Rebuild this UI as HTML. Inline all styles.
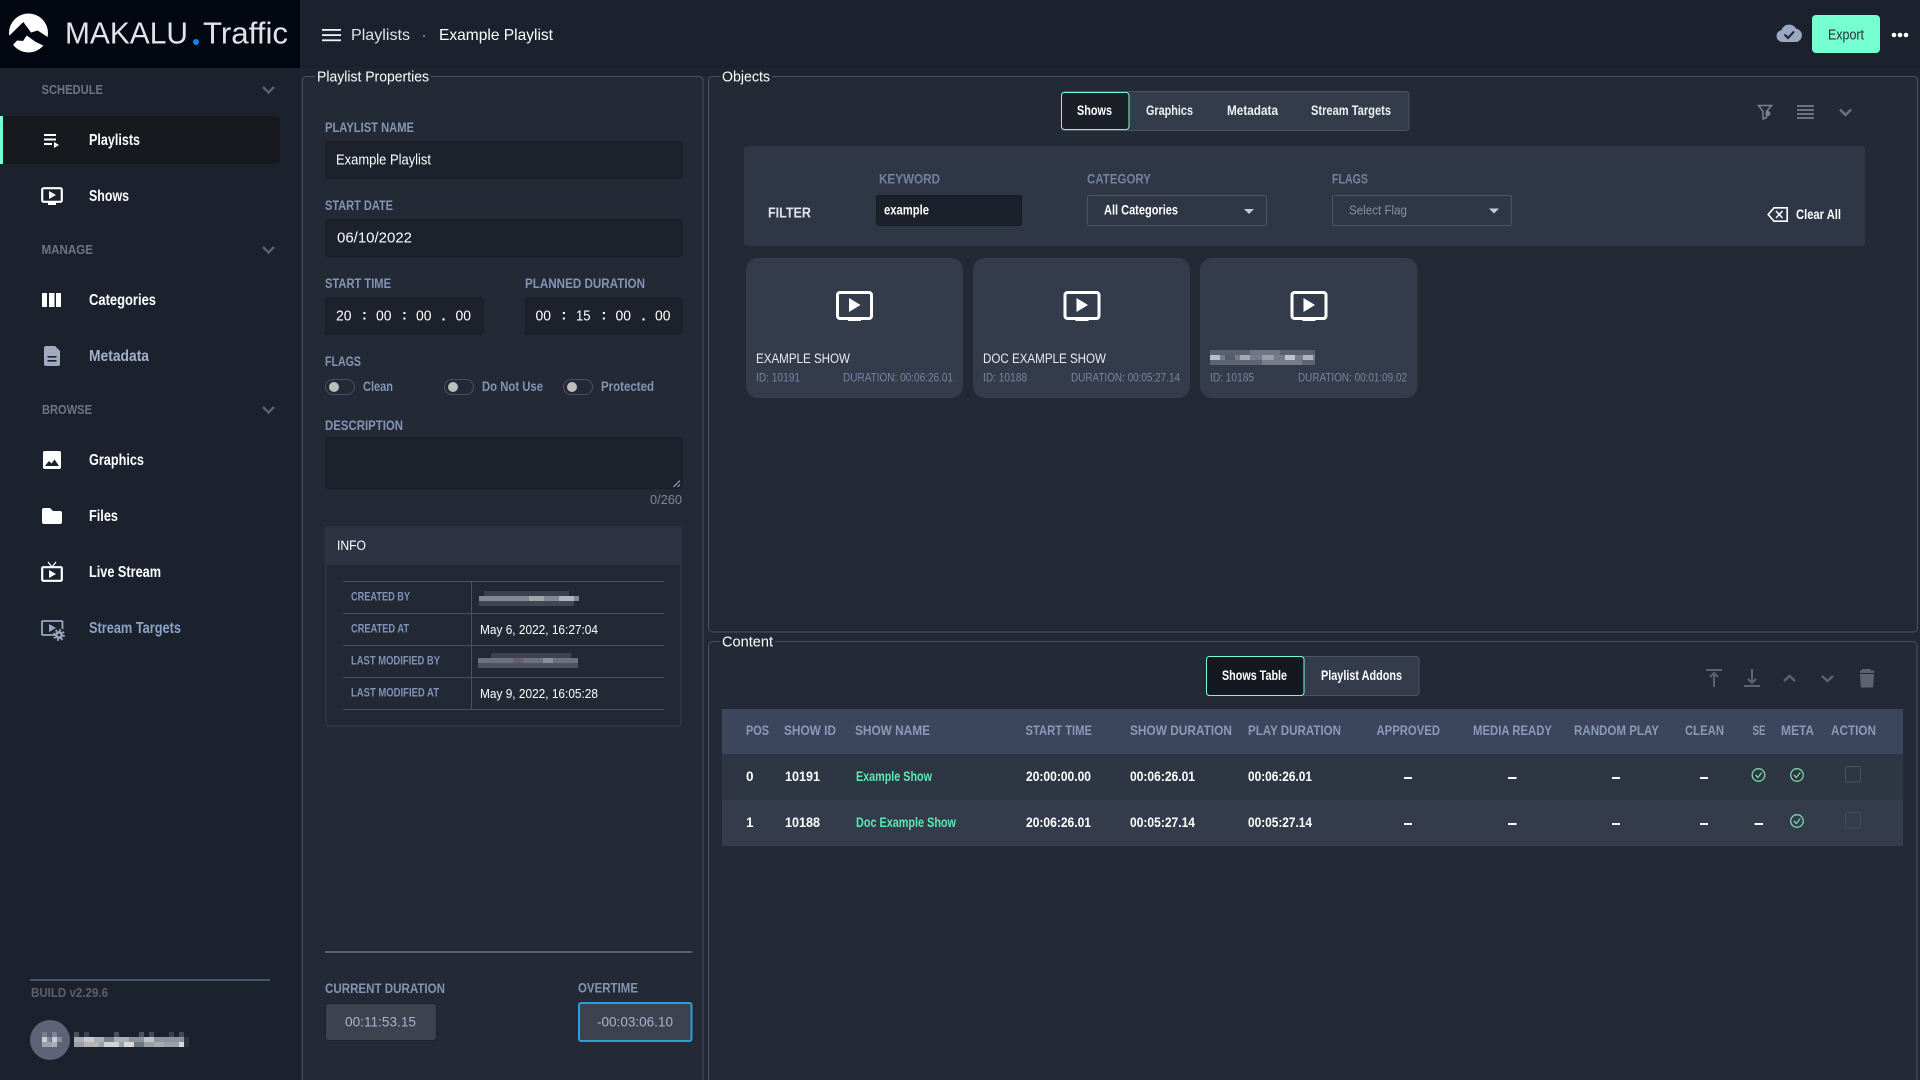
<!DOCTYPE html>
<html lang="en"><head><meta charset="utf-8"><title>Playlists - MAKALU.Traffic</title>
<style>
html,body{margin:0;padding:0;background:#232934;width:1920px;height:1080px;overflow:hidden}
svg{display:block;font-family:"Liberation Sans",sans-serif}
text{white-space:pre;transform:translateY(-.3px)}
.b{font-weight:700}
.lab{font-weight:700;font-size:13.5px;fill:#8494b5}
.sec{font-weight:700;font-size:13px;fill:#6f7480}
.nav{font-weight:700;font-size:15.5px;fill:#fff}
.val{font-size:14.5px;fill:#fff}
.tl{font-weight:700;font-size:11.5px;fill:#7f93b8}
.tv{font-size:13px;fill:#fff}
.th{font-weight:700;font-size:13.5px;fill:#8a9ab8}
.td{font-weight:700;font-size:13.5px;fill:#fff}
.ln{font-weight:700;font-size:13.5px;fill:#5ce9b5}
.tab{font-weight:700;font-size:14px;fill:#eef0f4}
.meta{font-size:12px;fill:#7685a4}
.ct{font-size:13.5px;fill:#e8ebf0}
.leg{font-size:15px;fill:#fff}
.ti{font-size:14.5px;fill:#fff}
</style></head><body>
<svg width="1920" height="1080" viewBox="0 0 1920 1080" xmlns="http://www.w3.org/2000/svg">
<!-- base -->
<rect width="1920" height="1080" fill="#232934"/>
<rect x="300" y="0" width="1620" height="68" fill="#1c222d"/>
<rect x="300" y="68" width="1620" height="8" fill="#1f2530"/>
<rect x="0" y="0" width="300" height="1080" fill="#1c222d"/>
<rect x="0" y="0" width="300" height="68" fill="#030711"/>

<!-- logo -->
<circle cx="28.5" cy="33" r="19.5" fill="#fff"/>
<path d="M8 37L23.3 22 31 32.500 37.700 30.500 49 38V42L43 45.500 35 41.500 26.700 35.500 23 41 17 40.500 13 45 8 43Z" fill="#030711"/>
<text x="65" y="44" font-size="30.5" fill="#e2e3e6" textLength="123" lengthAdjust="spacingAndGlyphs">MAKALU</text>
<rect x="193" y="39" width="6" height="6" rx="3" fill="#0a84ff"/>
<text x="203" y="44" font-size="30.5" fill="#e2e3e6" textLength="85" lengthAdjust="spacingAndGlyphs">Traffic</text>

<!-- sidebar -->
<text class="sec" x="41.5" y="94.5" textLength="61.5" lengthAdjust="spacingAndGlyphs">SCHEDULE</text>
<path d="M263 87l5.5 5.5L274 87" fill="none" stroke="#5c616d" stroke-width="2.4"/>
<path d="M0 116H276a4 4 0 0 1 4 4V160a4 4 0 0 1-4 4H0Z" fill="#17191f"/>
<rect x="0" y="116" width="3" height="48" fill="#75ffd0"/>
<g fill="#fff"><rect x="44" y="134" width="12" height="2"/><rect x="44" y="138.5" width="12" height="2"/><rect x="44" y="143" width="8" height="2"/><path d="M54 142l5 3-5 3z"/></g>
<text class="nav" x="89" y="145.5" textLength="51" lengthAdjust="spacingAndGlyphs">Playlists</text>

<rect x="42.2" y="188.2" width="19.6" height="13.6" rx="1.5" fill="none" stroke="#fff" stroke-width="2.2"/><rect x="48" y="202" width="8" height="3" fill="#fff"/><path d="M49 191l7 4-7 4z" fill="#fff"/>
<text class="nav" x="89" y="201.5" textLength="40" lengthAdjust="spacingAndGlyphs">Shows</text>

<text class="sec" x="41.5" y="254.5" textLength="51.5" lengthAdjust="spacingAndGlyphs">MANAGE</text>
<path d="M263 247l5.5 5.5L274 247" fill="none" stroke="#5c616d" stroke-width="2.4"/>
<g fill="#fff"><rect x="42" y="293" width="5" height="14"/><rect x="49" y="293" width="5.5" height="14"/><rect x="56" y="293" width="5" height="14"/></g>
<text class="nav" x="89" y="305.5" textLength="67" lengthAdjust="spacingAndGlyphs">Categories</text>

<path d="M46 346h9l5 5v13a2 2 0 0 1-2 2H46a2 2 0 0 1-2-2V348a2 2 0 0 1 2-2Z" fill="#a0aac0"/><rect x="47.5" y="356" width="9" height="1.6" fill="#1c222d"/><rect x="47.5" y="360" width="9" height="1.6" fill="#1c222d"/>
<text class="nav" x="89" y="361.5" textLength="60" lengthAdjust="spacingAndGlyphs" style="fill:#a3b0cc">Metadata</text>

<text class="sec" x="42" y="414.5" textLength="50" lengthAdjust="spacingAndGlyphs">BROWSE</text>
<path d="M263 407l5.5 5.5L274 407" fill="none" stroke="#5c616d" stroke-width="2.4"/>
<rect x="43" y="451" width="18" height="18" rx="2" fill="#fff"/><path d="M45 466l4-5 2.5 2.5 3-4 4.5 6.5z" fill="#1c222d"/>
<text class="nav" x="89" y="465.5" textLength="55" lengthAdjust="spacingAndGlyphs">Graphics</text>

<path d="M42 510a2 2 0 0 1 2-2h6l3 3h7a2 2 0 0 1 2 2v9a2 2 0 0 1-2 2H44a2 2 0 0 1-2-2Z" fill="#fff"/>
<text class="nav" x="89" y="521.5" textLength="29" lengthAdjust="spacingAndGlyphs">Files</text>

<rect x="42.2" y="567.2" width="19.6" height="13.6" rx="1" fill="none" stroke="#fff" stroke-width="2.2"/><path d="M48 562l4 5 4-5" fill="none" stroke="#fff" stroke-width="1.2"/><path d="M49 570l7 4-7 4z" fill="#fff"/>
<text class="nav" x="89" y="577.5" textLength="72" lengthAdjust="spacingAndGlyphs">Live Stream</text>

<path d="M55 635H43a1 1 0 0 1-1-1V622a1 1 0 0 1 1-1H61.500a1 1 0 0 1 1 1v7" fill="none" stroke="#9ca8c0" stroke-width="1.800"/><path d="M49 624l7 4-7 4z" fill="#9ca8c0"/>
<circle cx="59" cy="635" r="4" fill="#9ca8c0"/><circle cx="59" cy="635" r="5" fill="none" stroke="#9ca8c0" stroke-width="1.800" stroke-dasharray="2 1.930"/><circle cx="59" cy="635" r="1.400" fill="#1c222d"/>
<text class="nav" x="89" y="633.500" textLength="92" lengthAdjust="spacingAndGlyphs" style="fill:#8ba3c9">Stream Targets</text>

<rect x="30" y="979" width="240" height="2" fill="#465470"/>
<text class="sec" x="31" y="997.500" textLength="77" lengthAdjust="spacingAndGlyphs" style="fill:#5b606c">BUILD v2.29.6</text>
<circle cx="50" cy="1040" r="20" fill="#5e6377"/>
<g fill="#c9ced6"><rect x="42" y="1032" width="5" height="5" opacity=".25"/><rect x="52" y="1032" width="5" height="5" opacity=".3"/><rect x="42" y="1037" width="5" height="5"/><rect x="47" y="1037" width="4" height="5" opacity=".35"/><rect x="52" y="1037" width="5" height="5"/><rect x="57" y="1037" width="5" height="5" opacity=".4"/><rect x="42" y="1042" width="5" height="5" opacity=".6"/><rect x="47" y="1042" width="5" height="5" opacity=".6"/><rect x="52" y="1042" width="5" height="5" opacity=".7"/></g>
<g>
<rect x="74" y="1032" width="5" height="5" fill="#4a4f59"/><rect x="84" y="1032" width="5" height="5" fill="#3e4450"/><rect x="114" y="1032" width="5" height="5" fill="#4a4f59"/><rect x="139" y="1032" width="5" height="5" fill="#4c525e"/><rect x="149" y="1032" width="5" height="5" fill="#454b57"/><rect x="169" y="1032" width="5" height="5" fill="#3a404c"/><rect x="179" y="1032" width="5" height="5" fill="#454a54"/>
<rect x="74" y="1037" width="55" height="5" fill="#aab0b8"/><rect x="129" y="1037" width="55" height="5" fill="#8c939e"/><rect x="84" y="1037" width="10" height="5" fill="#c8ccd2"/><rect x="104" y="1037" width="10" height="5" fill="#7a808c"/><rect x="144" y="1037" width="10" height="5" fill="#c0c4c8"/><rect x="184" y="1037" width="5" height="5" fill="#2e333d"/>
<rect x="74" y="1042" width="110" height="5" fill="#9aa0aa"/><rect x="84" y="1042" width="15" height="5" fill="#b8b4b0"/><rect x="104" y="1042" width="15" height="5" fill="#d0d4d8"/><rect x="124" y="1042" width="10" height="5" fill="#e0d8d0"/><rect x="134" y="1042" width="10" height="5" fill="#707680"/><rect x="154" y="1042" width="10" height="5" fill="#a8acb0"/><rect x="179" y="1042" width="5" height="5" fill="#d8d8d8"/><rect x="184" y="1042" width="5" height="5" fill="#2e333d"/>
</g>

<!-- topbar -->
<g fill="#f2f3f5"><rect x="322" y="29" width="19" height="1.800"/><rect x="322" y="34.200" width="19" height="1.800"/><rect x="322" y="39.400" width="19" height="1.800"/></g>
<text x="351" y="40.500" font-size="16" fill="#e0e3e8" textLength="59" lengthAdjust="spacingAndGlyphs">Playlists</text>
<circle cx="424" cy="36" r="1.200" fill="#6d7483"/>
<text x="439" y="40.500" font-size="16" fill="#fff" textLength="114" lengthAdjust="spacingAndGlyphs">Example Playlist</text>
<path d="M1782 42a6 6 0 0 1-.5-11.900 8 8 0 0 1 14.500-1.500 6.800 6.800 0 0 1 .5 13.400Z" fill="#9ba8c4"/><path d="M1784.500 34.500l3.500 3.500 6-6.500" fill="none" stroke="#1c222d" stroke-width="2"/>
<rect x="1812" y="15" width="68" height="38" rx="4" fill="#75ffd0"/>
<text x="1828" y="40" font-size="14.500" fill="#2a3038" textLength="36" lengthAdjust="spacingAndGlyphs">Export</text>
<g fill="#fff"><circle cx="1894" cy="35" r="2.300"/><circle cx="1900" cy="35" r="2.300"/><circle cx="1906" cy="35" r="2.300"/></g>

<!-- left panel -->
<rect x="302.500" y="76.500" width="400.500" height="1010" rx="4" fill="#242a35" stroke="#4a5064"/>
<rect x="315" y="74" width="116" height="5" fill="#242a35"/>
<text class="leg" x="317" y="82" textLength="112" lengthAdjust="spacingAndGlyphs">Playlist Properties</text>

<text class="lab" x="325" y="132.500" textLength="89" lengthAdjust="spacingAndGlyphs">PLAYLIST NAME</text>
<rect x="325.500" y="141.500" width="356.500" height="37" rx="3" fill="#1c212c" stroke="#191d26"/>
<text class="val" x="336" y="165" textLength="95" lengthAdjust="spacingAndGlyphs">Example Playlist</text>

<text class="lab" x="325" y="210.500" textLength="68" lengthAdjust="spacingAndGlyphs">START DATE</text>
<rect x="325.500" y="219.500" width="356.500" height="37" rx="3" fill="#1c212c" stroke="#191d26"/>
<text class="val" x="337" y="243" textLength="75" lengthAdjust="spacingAndGlyphs">06/10/2022</text>

<text class="lab" x="325" y="288.500" textLength="66" lengthAdjust="spacingAndGlyphs">START TIME</text>
<text class="lab" x="525" y="288.500" textLength="120" lengthAdjust="spacingAndGlyphs">PLANNED DURATION</text>
<rect x="325.500" y="297.500" width="157.500" height="37" rx="3" fill="#1c212c" stroke="#191d26"/>
<rect x="525.500" y="297.500" width="156.500" height="37" rx="3" fill="#1c212c" stroke="#191d26"/>
<text class="ti" x="336" y="321" textLength="15.500" lengthAdjust="spacingAndGlyphs">20</text><text class="ti b" x="362" y="320">:</text>
<text class="ti" x="376" y="321" textLength="15.500" lengthAdjust="spacingAndGlyphs">00</text><text class="ti b" x="402" y="320">:</text>
<text class="ti" x="416" y="321" textLength="15.500" lengthAdjust="spacingAndGlyphs">00</text><text class="ti b" x="441.500" y="321">.</text>
<text class="ti" x="455.500" y="321" textLength="15.500" lengthAdjust="spacingAndGlyphs">00</text>
<text class="ti" x="535.500" y="321" textLength="15.500" lengthAdjust="spacingAndGlyphs">00</text><text class="ti b" x="561.500" y="320">:</text>
<text class="ti" x="576" y="321" textLength="14.500" lengthAdjust="spacingAndGlyphs">15</text><text class="ti b" x="601.500" y="320">:</text>
<text class="ti" x="615.500" y="321" textLength="15.500" lengthAdjust="spacingAndGlyphs">00</text><text class="ti b" x="641.500" y="321">.</text>
<text class="ti" x="655" y="321" textLength="15.500" lengthAdjust="spacingAndGlyphs">00</text>

<text class="lab" x="325" y="366.500" textLength="36" lengthAdjust="spacingAndGlyphs">FLAGS</text>
<g fill="none" stroke="#4a5064"><rect x="325.500" y="379.500" width="29" height="15" rx="7.500"/><rect x="444.500" y="379.500" width="29" height="15" rx="7.500"/><rect x="563.500" y="379.500" width="29" height="15" rx="7.500"/></g>
<g fill="#bdbdbd"><circle cx="334" cy="387" r="5"/><circle cx="453" cy="387" r="5"/><circle cx="572" cy="387" r="5"/></g>
<text class="lab" x="363" y="391.500" textLength="30" lengthAdjust="spacingAndGlyphs">Clean</text>
<text class="lab" x="482" y="391.500" textLength="61" lengthAdjust="spacingAndGlyphs">Do Not Use</text>
<text class="lab" x="601" y="391.500" textLength="53" lengthAdjust="spacingAndGlyphs">Protected</text>

<text class="lab" x="325" y="430.500" textLength="78" lengthAdjust="spacingAndGlyphs">DESCRIPTION</text>
<rect x="325.500" y="437.500" width="356.500" height="51" rx="3" fill="#1c212c" stroke="#191d26"/>
<path d="M673.500 487l6.500-6.500M677.500 487l2.500-2.500" stroke="#aab0bc" stroke-width="1"/>
<text x="650" y="504.500" font-size="12.500" fill="#7e8699" textLength="32" lengthAdjust="spacingAndGlyphs">0/260</text>

<rect x="325" y="526" width="357" height="201" rx="3" fill="#2d3342"/>
<rect x="327" y="565" width="353" height="160" fill="#232934"/>
<text x="337" y="550.500" font-size="13.500" fill="#fff" textLength="29" lengthAdjust="spacingAndGlyphs">INFO</text>
<g fill="#4a5163"><rect x="343" y="581" width="321" height="1"/><rect x="343" y="613" width="321" height="1"/><rect x="343" y="645" width="321" height="1"/><rect x="343" y="677" width="321" height="1"/><rect x="343" y="709" width="321" height="1"/><rect x="471" y="581" width="1" height="129"/></g>
<text class="tl" x="351" y="601" textLength="59" lengthAdjust="spacingAndGlyphs">CREATED BY</text>
<text class="tl" x="351" y="633" textLength="58" lengthAdjust="spacingAndGlyphs">CREATED AT</text>
<text class="tl" x="351" y="665" textLength="89" lengthAdjust="spacingAndGlyphs">LAST MODIFIED BY</text>
<text class="tl" x="351" y="697" textLength="88" lengthAdjust="spacingAndGlyphs">LAST MODIFIED AT</text>
<text class="tv" x="480" y="634.500" textLength="118" lengthAdjust="spacingAndGlyphs">May 6, 2022, 16:27:04</text>
<text class="tv" x="480" y="698.500" textLength="118" lengthAdjust="spacingAndGlyphs">May 9, 2022, 16:05:28</text>
<rect x="479" y="596" width="100" height="5" fill="#838896"/><rect x="484" y="591" width="85" height="5" fill="#3a404c"/><rect x="479" y="601" width="95" height="5" fill="#414753"/>
<rect x="529" y="596" width="15" height="5" fill="#a0a8aa"/><rect x="559" y="596" width="15" height="5" fill="#b0b4c0"/>
<rect x="478" y="658" width="100" height="5" fill="#6d727e"/><rect x="491" y="653" width="80" height="5" fill="#3d434f"/><rect x="478" y="663" width="100" height="5" fill="#4e535f"/>
<rect x="513" y="658" width="10" height="5" fill="#6e5c6e"/><rect x="543" y="658" width="10" height="5" fill="#8a8e98"/>

<rect x="325" y="951" width="367" height="2" fill="#53607a"/>
<text class="lab" x="325" y="993.500" textLength="120" lengthAdjust="spacingAndGlyphs">CURRENT DURATION</text>
<rect x="325.500" y="1003.500" width="111" height="37" rx="3" fill="#3d424e" stroke="#1e222b"/>
<text x="345" y="1027" font-size="14" fill="#a6b4cf" textLength="71" lengthAdjust="spacingAndGlyphs">00:11:53.15</text>
<text class="lab" x="578" y="993" textLength="60" lengthAdjust="spacingAndGlyphs">OVERTIME</text>
<rect x="579" y="1003" width="112.500" height="38" rx="2" fill="#3d424e" stroke="#2aa0d8" stroke-width="2"/>
<text x="597" y="1027" font-size="14" fill="#a6b4cf" textLength="76" lengthAdjust="spacingAndGlyphs">-00:03:06.10</text>

<!-- objects panel -->
<rect x="708.500" y="76.500" width="1209" height="555.500" rx="4" fill="#242a35" stroke="#4a5064"/>
<rect x="720" y="74" width="52" height="5" fill="#242a35"/>
<text class="leg" x="722" y="82" textLength="48" lengthAdjust="spacingAndGlyphs">Objects</text>

<rect x="1061.500" y="91.500" width="347.500" height="39" rx="3" fill="#343c4b" stroke="#4a5263"/>
<rect x="1061.500" y="92.500" width="67.500" height="37" rx="3" fill="#1b1f28" stroke="#75ffd0"/>
<text class="tab" x="1077" y="115.500" textLength="35" lengthAdjust="spacingAndGlyphs" style="fill:#fff">Shows</text>
<text class="tab" x="1146" y="115.500" textLength="47" lengthAdjust="spacingAndGlyphs">Graphics</text>
<text class="tab" x="1227" y="115.500" textLength="51" lengthAdjust="spacingAndGlyphs">Metadata</text>
<text class="tab" x="1311" y="115.500" textLength="80" lengthAdjust="spacingAndGlyphs">Stream Targets</text>

<path d="M1758.500 105.500h13l-5 6 -0 6 -3.500 1.500v-7.500z" fill="none" stroke="#7a8090" stroke-width="1.500"/><circle cx="1768" cy="113.500" r="2.500" fill="#7a8090"/>
<g fill="#6c7280"><rect x="1797" y="105" width="17" height="2"/><rect x="1797" y="109" width="17" height="2"/><rect x="1797" y="113" width="17" height="2"/><rect x="1797" y="117" width="17" height="2"/></g>
<path d="M1840 109.500l5.500 5.500 5.500-5.500" fill="none" stroke="#6c7280" stroke-width="2.400"/>

<rect x="744" y="146" width="1121" height="100" rx="3" fill="#2f3746"/>
<text x="768" y="218" font-size="14.500" class="b" fill="#dfe4ea" textLength="43" lengthAdjust="spacingAndGlyphs">FILTER</text>
<text class="lab" x="879" y="184" textLength="61" lengthAdjust="spacingAndGlyphs" style="fill:#73829f">KEYWORD</text>
<rect x="876.500" y="195.500" width="145" height="30" rx="2" fill="#1b202a" stroke="#171b23"/>
<text class="td" x="884" y="215" textLength="45" lengthAdjust="spacingAndGlyphs">example</text>
<text class="lab" x="1087" y="184" textLength="64" lengthAdjust="spacingAndGlyphs" style="fill:#73829f">CATEGORY</text>
<rect x="1087.500" y="195.500" width="179" height="30" rx="2" fill="#2f3746" stroke="#4d5567"/>
<text class="td" x="1104" y="215" textLength="74" lengthAdjust="spacingAndGlyphs">All Categories</text>
<path d="M1244 209h10l-5 5z" fill="#c8ccd4"/>
<text class="lab" x="1332" y="184" textLength="36" lengthAdjust="spacingAndGlyphs" style="fill:#73829f">FLAGS</text>
<rect x="1332.500" y="195.500" width="179" height="30" rx="2" fill="#2f3746" stroke="#4d5567"/>
<text x="1349" y="215" font-size="12.500" fill="#8790a0" textLength="58" lengthAdjust="spacingAndGlyphs">Select Flag</text>
<path d="M1489 208.500h10l-5 5z" fill="#c8ccd4"/>
<path d="M1774 207.800h13.200v13.400h-13.200l-5.800-6.700z" fill="none" stroke="#fff" stroke-width="1.600"/><path d="M1776 211l6.500 7M1782.500 211l-6.500 7" stroke="#fff" stroke-width="1.500"/>
<text class="tab" x="1796" y="219.500" textLength="45" lengthAdjust="spacingAndGlyphs" style="fill:#fff">Clear All</text>

<!-- cards -->
<g fill="#343c4b"><rect x="746" y="258" width="217" height="140" rx="12"/><rect x="973" y="258" width="217" height="140" rx="12"/><rect x="1200" y="258" width="217.500" height="140" rx="12"/></g>
<g id="ci"><rect x="837.500" y="292.500" width="34" height="26" rx="2.500" fill="none" stroke="#fff" stroke-width="3"/><rect x="848" y="318" width="13" height="3" fill="#fff"/><path d="M849 298l11.500 7-11.500 7z" fill="#fff"/></g>
<g transform="translate(227.500 0)"><rect x="837.500" y="292.500" width="34" height="26" rx="2.500" fill="none" stroke="#fff" stroke-width="3"/><rect x="848" y="318" width="13" height="3" fill="#fff"/><path d="M849 298l11.500 7-11.500 7z" fill="#fff"/></g>
<g transform="translate(454.500 0)"><rect x="837.500" y="292.500" width="34" height="26" rx="2.500" fill="none" stroke="#fff" stroke-width="3"/><rect x="848" y="318" width="13" height="3" fill="#fff"/><path d="M849 298l11.500 7-11.500 7z" fill="#fff"/></g>
<text class="ct" x="756" y="363.500" textLength="94" lengthAdjust="spacingAndGlyphs">EXAMPLE SHOW</text>
<text class="ct" x="983" y="363.500" textLength="123" lengthAdjust="spacingAndGlyphs">DOC EXAMPLE SHOW</text>
<rect x="1210" y="350" width="105" height="15" fill="#757c89"/><rect x="1210" y="350" width="105" height="5" fill="#596070"/><rect x="1210" y="360" width="105" height="5" fill="#5c6372"/>
<rect x="1210" y="355" width="10" height="5" fill="#b9bdc4"/><rect x="1225" y="355" width="10" height="5" fill="#555c6a"/><rect x="1240" y="355" width="10" height="5" fill="#a4a8b0"/><rect x="1262" y="355" width="12" height="5" fill="#9a9ea6"/><rect x="1285" y="355" width="10" height="5" fill="#c0c4c8"/><rect x="1303" y="355" width="10" height="5" fill="#b0b4bb"/><rect x="1250" y="350" width="30" height="5" fill="#707784"/><rect x="1262" y="360" width="40" height="5" fill="#767d8a"/>
<text class="meta" x="756" y="382" textLength="44" lengthAdjust="spacingAndGlyphs">ID: 10191</text>
<text class="meta" x="843" y="382" textLength="110" lengthAdjust="spacingAndGlyphs">DURATION: 00:06:26.01</text>
<text class="meta" x="983" y="382" textLength="44" lengthAdjust="spacingAndGlyphs">ID: 10188</text>
<text class="meta" x="1071" y="382" textLength="109" lengthAdjust="spacingAndGlyphs">DURATION: 00:05:27.14</text>
<text class="meta" x="1210" y="382" textLength="44" lengthAdjust="spacingAndGlyphs">ID: 10185</text>
<text class="meta" x="1298" y="382" textLength="109" lengthAdjust="spacingAndGlyphs">DURATION: 00:01:09.02</text>

<!-- content panel -->
<rect x="708.500" y="641.500" width="1208.500" height="460" rx="4" fill="#242a35" stroke="#4a5064"/>
<rect x="720" y="639" width="55" height="5" fill="#242a35"/>
<text class="leg" x="722" y="647" textLength="51" lengthAdjust="spacingAndGlyphs">Content</text>

<rect x="1206.500" y="656.500" width="212.500" height="39" rx="3" fill="#343c4b" stroke="#4a5263"/>
<rect x="1206.500" y="656.500" width="97.500" height="39" rx="3" fill="#141820" stroke="#75ffd0"/>
<text class="tab" x="1222" y="680.500" textLength="65" lengthAdjust="spacingAndGlyphs" style="fill:#fff">Shows Table</text>
<text class="tab" x="1321" y="680.500" textLength="81" lengthAdjust="spacingAndGlyphs" style="fill:#fff">Playlist Addons</text>

<g fill="none" stroke="#5d6370" stroke-width="2"><path d="M1706 670h16M1714 687V674M1710 677l4-4 4 4"/><path d="M1744 686h16M1752 669V682M1748 679l4 4 4-4"/><path d="M1784 681l5.500-5 5.500 5" stroke-width="2.400"/><path d="M1822 676l5.500 5 5.500-5" stroke-width="2.400"/></g>
<path d="M1862 669h8l1 1.500h3v2.500h-14v-2.500h2zM1860 674h14l-.8 12.500a1 1 0 0 1-1 1h-10.400a1 1 0 0 1-1-1z" fill="#5d6370"/>

<rect x="722" y="709" width="1181" height="45" fill="#3b455c"/>
<rect x="722" y="754" width="1181" height="46" fill="#2e3644"/>
<rect x="722" y="800" width="1181" height="46" fill="#343c4b"/>
<text class="th" x="746" y="735.500" textLength="23" lengthAdjust="spacingAndGlyphs">POS</text>
<text class="th" x="784" y="735.500" textLength="52" lengthAdjust="spacingAndGlyphs">SHOW ID</text>
<text class="th" x="855" y="735.500" textLength="75" lengthAdjust="spacingAndGlyphs">SHOW NAME</text>
<text class="th" x="1025.500" y="735.500" textLength="66.500" lengthAdjust="spacingAndGlyphs">START TIME</text>
<text class="th" x="1130" y="735.500" textLength="102" lengthAdjust="spacingAndGlyphs">SHOW DURATION</text>
<text class="th" x="1248" y="735.500" textLength="93" lengthAdjust="spacingAndGlyphs">PLAY DURATION</text>
<text class="th" x="1376.500" y="735.500" textLength="63.500" lengthAdjust="spacingAndGlyphs">APPROVED</text>
<text class="th" x="1473" y="735.500" textLength="79" lengthAdjust="spacingAndGlyphs">MEDIA READY</text>
<text class="th" x="1574" y="735.500" textLength="85" lengthAdjust="spacingAndGlyphs">RANDOM PLAY</text>
<text class="th" x="1685" y="735.500" textLength="39" lengthAdjust="spacingAndGlyphs">CLEAN</text>
<text class="th" x="1752.500" y="735.500" textLength="13" lengthAdjust="spacingAndGlyphs">SE</text>
<text class="th" x="1781" y="735.500" textLength="33" lengthAdjust="spacingAndGlyphs">META</text>
<text class="th" x="1831" y="735.500" textLength="45" lengthAdjust="spacingAndGlyphs">ACTION</text>

<text class="td" x="746" y="781.500">0</text>
<text class="td" x="785" y="781.500" textLength="35" lengthAdjust="spacingAndGlyphs">10191</text>
<text class="ln" x="856" y="781.500" textLength="76" lengthAdjust="spacingAndGlyphs">Example Show</text>
<text class="td" x="1026" y="781.500" textLength="65" lengthAdjust="spacingAndGlyphs">20:00:00.00</text>
<text class="td" x="1130" y="781.500" textLength="65" lengthAdjust="spacingAndGlyphs">00:06:26.01</text>
<text class="td" x="1248" y="781.500" textLength="64" lengthAdjust="spacingAndGlyphs">00:06:26.01</text>
<text class="td" x="746" y="827.500">1</text>
<text class="td" x="785" y="827.500" textLength="35" lengthAdjust="spacingAndGlyphs">10188</text>
<text class="ln" x="856" y="827.500" textLength="100" lengthAdjust="spacingAndGlyphs">Doc Example Show</text>
<text class="td" x="1026" y="827.500" textLength="65" lengthAdjust="spacingAndGlyphs">20:06:26.01</text>
<text class="td" x="1130" y="827.500" textLength="65" lengthAdjust="spacingAndGlyphs">00:05:27.14</text>
<text class="td" x="1248" y="827.500" textLength="64" lengthAdjust="spacingAndGlyphs">00:05:27.14</text>
<g fill="#fff">
<rect x="1404" y="777" width="8" height="2"/><rect x="1508" y="777" width="8.500" height="2"/><rect x="1612" y="777" width="8" height="2"/><rect x="1700" y="777" width="8" height="2"/>
<rect x="1404" y="823" width="8" height="2"/><rect x="1508" y="823" width="8.500" height="2"/><rect x="1612" y="823" width="8" height="2"/><rect x="1700" y="823" width="8" height="2"/><rect x="1754.500" y="823" width="8.500" height="2"/>
</g>
<g fill="none" stroke="#7cd6a8" stroke-width="1.300">
<circle cx="1758.500" cy="775" r="6.300"/><path d="M1755.500 775l2.300 2.500 4-5"/>
<circle cx="1797" cy="775" r="6.300"/><path d="M1794 775l2.300 2.500 4-5"/>
<circle cx="1797" cy="821" r="6.300"/><path d="M1794 821l2.300 2.500 4-5"/>
</g>
<rect x="1845.500" y="766.500" width="15" height="15.500" rx="2" fill="none" stroke="#4a5160"/>
<rect x="1845.500" y="812.500" width="15" height="15.500" rx="2" fill="none" stroke="#454c5b"/>
</svg>
</body></html>
